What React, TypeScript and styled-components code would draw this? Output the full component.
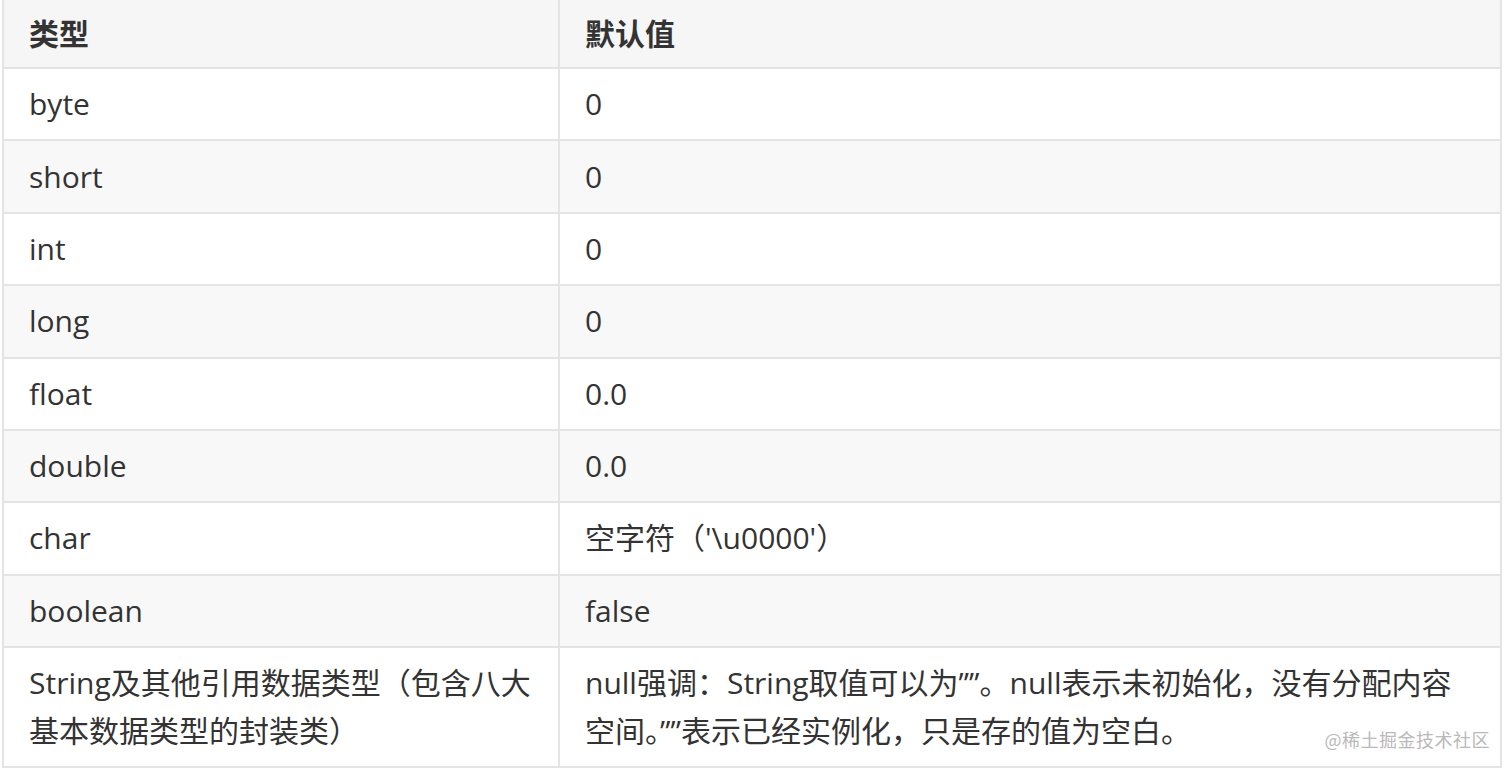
import styled, { createGlobalStyle } from "styled-components";

const GlobalStyle = createGlobalStyle`
  html, body {
    margin: 0;
    padding: 0;
    background: #ffffff;
  }
  body {
    font-family: "Open Sans", "Noto Sans CJK SC", sans-serif;
    color: #333333;
  }
`;

const rows: Array<{ type: string; value: string }> = [
  { type: "byte", value: "0" },
  { type: "short", value: "0" },
  { type: "int", value: "0" },
  { type: "long", value: "0" },
  { type: "float", value: "0.0" },
  { type: "double", value: "0.0" },
  { type: "char", value: "空字符（'\\u0000'）" },
  { type: "boolean", value: "false" },
  {
    type: "String及其他引用数据类型（包含八大基本数据类型的封装类）",
    value:
      "null强调：String取值可以为\u201D\u201D。null表示未初始化，没有分配内容空间。\u201D\u201D表示已经实例化，只是存的值为空白。",
  },
];

export default function App() {
  return (
    <>
      <GlobalStyle />
      <Page>
        <Table>
          <colgroup>
            <col style={{ width: 556 }} />
            <col />
          </colgroup>
          <thead>
            <tr>
              <HeadCell>类型</HeadCell>
              <HeadCell>默认值</HeadCell>
            </tr>
          </thead>
          <tbody>
            {rows.map((row, i) => (
              <Row key={`row-${row.type}`} striped={i % 2 === 1}>
                <Cell>{row.type}</Cell>
                <Cell>{row.value}</Cell>
              </Row>
            ))}
          </tbody>
        </Table>
        <Watermark>@稀土掘金技术社区</Watermark>
      </Page>
    </>
  );
}

const Page = styled.div`
  position: relative;
  width: 1512px;
  height: 770px;
  padding: 0 0 0 2px;
  box-sizing: border-box;
  overflow: hidden;
`;

const Table = styled.table`
  width: 1500px;
  border-collapse: collapse;
  table-layout: fixed;
  font-size: 30px;
`;

const HeadCell = styled.th`
  height: 67px;
  padding: 0 25px;
  text-align: left;
  font-weight: 700;
  background: #f6f6f6;
  border: 2px solid #e2e4e6;
  border-top: none;
  line-height: 48px;
`;

const Row = styled.tr<{ striped?: boolean }>`
  background: ${(props) => (props.striped ? "#f8f8f8" : "#ffffff")};
`;

const Cell = styled.td`
  padding: 11.2px 25px;
  border: 2px solid #e2e4e6;
  line-height: 48px;
  vertical-align: middle;
  word-break: break-all;
`;

const Watermark = styled.div`
  position: absolute;
  right: 22px;
  bottom: 18px;
  font-family: "Noto Sans CJK SC", sans-serif;
  font-size: 18px;
  color: #b9b9b9;
  letter-spacing: 0.5px;
`;
